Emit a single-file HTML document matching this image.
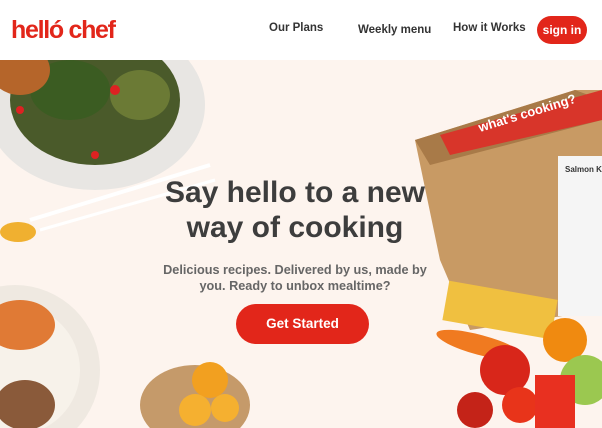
<!DOCTYPE html>
<html><head><meta charset="utf-8"><style>
*{margin:0;padding:0;box-sizing:border-box}
html,body{width:602px;height:428px;overflow:hidden}
body{font-family:"Liberation Sans",sans-serif;background:#fdf4ee;position:relative}
.nav{position:absolute;left:0;top:0;width:602px;height:60px;background:#fff}
.logo{position:absolute;left:11px;top:16px;font-size:25px;font-weight:bold;color:#e2261a;letter-spacing:-1.3px}
.nl{position:absolute;top:22px;font-size:11.5px;font-weight:bold;color:#333}
.sign{position:absolute;left:537px;top:16px;width:50px;height:28px;border-radius:14px;background:#e2261a;color:#fff;font-size:12px;font-weight:bold;text-align:center;line-height:28px}
h1{position:absolute;left:140px;top:175px;width:310px;text-align:center;font-size:30px;line-height:35px;color:#3d3d3d;font-weight:bold}
.sub{position:absolute;left:150px;top:262px;width:290px;text-align:center;font-size:12.7px;line-height:16px;color:#666;font-weight:bold}
.btn{position:absolute;left:236px;top:304px;width:133px;height:40px;border-radius:20px;background:#e2261a;color:#fff;font-size:13.5px;font-weight:bold;text-align:center;line-height:40px}
</style></head><body>
<svg style="position:absolute;left:0;top:60px" width="602" height="368">
<ellipse cx="95" cy="45" rx="110" ry="85" fill="#e8e6e3"/>
<ellipse cx="95" cy="40" rx="85" ry="65" fill="#4a5a2a"/>
<ellipse cx="70" cy="30" rx="40" ry="30" fill="#3b5c22"/>
<ellipse cx="140" cy="35" rx="30" ry="25" fill="#6b7a35"/>
<ellipse cx="20" cy="10" rx="30" ry="25" fill="#b5652a"/>
<circle cx="115" cy="30" r="5" fill="#d22"/><circle cx="95" cy="95" r="4" fill="#d22"/><circle cx="20" cy="50" r="4" fill="#d22"/>
<line x1="30" y1="160" x2="210" y2="105" stroke="#fff" stroke-width="4"/>
<line x1="40" y1="170" x2="215" y2="120" stroke="#fff" stroke-width="3"/>
<ellipse cx="18" cy="172" rx="18" ry="10" fill="#f0b030"/>
<circle cx="15" cy="310" r="85" fill="#efe9e1"/>
<circle cx="15" cy="310" r="65" fill="#f7f2ea"/>
<ellipse cx="20" cy="265" rx="35" ry="25" fill="#e07a35"/>
<ellipse cx="25" cy="345" rx="30" ry="25" fill="#8a5a3a"/>
<ellipse cx="195" cy="345" rx="55" ry="40" fill="#c59a6a"/>
<circle cx="210" cy="320" r="18" fill="#f2a020"/>
<circle cx="195" cy="350" r="16" fill="#f5b030"/><circle cx="225" cy="348" r="14" fill="#f5b030"/>
<polygon points="415,80 575,30 602,30 602,250 470,270 440,200" fill="#c89a64"/>
<polygon points="415,80 575,30 602,40 602,60 430,105" fill="#a87a48"/>
<polygon points="440,75 602,30 602,60 450,95" fill="#d8352a"/>
<text x="480" y="72" fill="#fff" font-size="13" font-weight="bold" transform="rotate(-17 480 72)" font-family="Liberation Sans">what's cooking?</text>
<rect x="558" y="96" width="50" height="160" fill="#f5f5f5"/>
<text x="565" y="112" font-size="8" font-weight="bold" fill="#333" font-family="Liberation Sans">Salmon Ka</text>
<rect x="445" y="230" width="110" height="40" fill="#f0c040" transform="rotate(10 500 250)"/>
<ellipse cx="480" cy="285" rx="45" ry="10" fill="#f07a20" transform="rotate(15 480 285)"/>
<circle cx="565" cy="280" r="22" fill="#f08a10"/>
<circle cx="505" cy="310" r="25" fill="#d8261a"/>
<circle cx="520" cy="345" r="18" fill="#e8341a"/>
<circle cx="585" cy="320" r="25" fill="#9bc850"/>
<rect x="535" y="315" width="40" height="53" fill="#e83020"/>
<circle cx="475" cy="350" r="18" fill="#c42318"/>
</svg>
<div class="nav">
<div class="logo">helló chef</div>
<div class="nl" style="left:269px">Our Plans</div>
<div class="nl" style="left:358px;top:24px">Weekly menu</div>
<div class="nl" style="left:453px">How it Works</div>
<div class="sign">sign in</div>
</div>
<h1>Say hello to a new way of cooking</h1>
<div class="sub">Delicious recipes. Delivered by us, made by you. Ready to unbox mealtime?</div>
<div class="btn">Get Started</div>
</body></html>
